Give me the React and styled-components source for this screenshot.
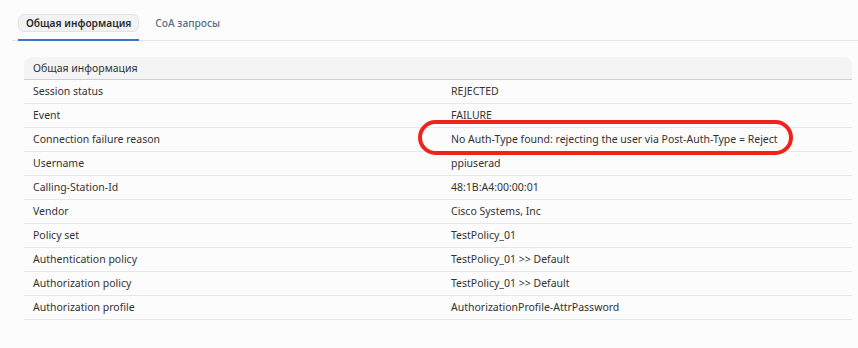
import styled, { createGlobalStyle } from "styled-components"

const Global = createGlobalStyle`
  html, body {
    margin: 0;
    padding: 0;
    background: #fcfcfc;
  }
  body {
    font-family: "Noto Sans", "Open Sans", sans-serif;
    font-size: 10.5px;
    color: #333;
  }
`

const Page = styled.div`
  width: 858px;
  height: 348px;
  padding-top: 14px;
  box-sizing: border-box;
`

const TabBar = styled.div`
  display: flex;
  gap: 8px;
  margin-left: 12px;
  padding-left: 6px;
  border-bottom: 1px solid #e6e6ea;
`

const Tab = styled.div`
  padding-bottom: 7px;
  margin-bottom: -1px;
  border-bottom: 2px solid ${(p) => (p.$active ? "#3b74c9" : "transparent")};
`

const TabLabel = styled.div`
  height: 18px;
  line-height: 17px;
  padding: 0 7px;
  box-sizing: border-box;
  border-radius: 6px;
  font-size: 10.2px;
  font-weight: ${(p) => (p.$active ? 600 : 500)};
  color: ${(p) => (p.$active ? "#2b2b2b" : "#5b6b88")};
  background: ${(p) => (p.$active ? "#f2f2f2" : "transparent")};
  border: 1px solid ${(p) => (p.$active ? "#e3e3e3" : "transparent")};
`

const Table = styled.div`
  margin: 16px 6px 0 24px;
`

const HeadRow = styled.div`
  height: 22px;
  line-height: 22px;
  padding-left: 9px;
  background: #f4f4f4;
  border-radius: 8px 8px 0 0;
  border-bottom: 1px solid #cfcdd9;
  color: #333;
`

const Row = styled.div`
  display: grid;
  grid-template-columns: 418px 1fr;
  height: 23px;
  line-height: 23px;
  border-bottom: 1px solid #e7e7e7;
`

const Cell = styled.div`
  position: relative;
  padding-left: 9px;
  white-space: nowrap;
`

const Highlight = styled.div`
  position: absolute;
  left: -24px;
  top: -8px;
  width: 375px;
  height: 35px;
  box-sizing: border-box;
  border: 4px solid #f0231a;
  border-radius: 18px;
  pointer-events: none;
`

const rows = [
  ["Session status", "REJECTED"],
  ["Event", "FAILURE"],
  ["Connection failure reason", "No Auth-Type found: rejecting the user via Post-Auth-Type = Reject", true],
  ["Username", "ppiuserad"],
  ["Calling-Station-Id", "48:1B:A4:00:00:01"],
  ["Vendor", "Cisco Systems, Inc"],
  ["Policy set", "TestPolicy_01"],
  ["Authentication policy", "TestPolicy_01 >> Default"],
  ["Authorization policy", "TestPolicy_01 >> Default"],
  ["Authorization profile", "AuthorizationProfile-AttrPassword"],
]

export default function App() {
  return (
    <Page>
      <Global />
      <TabBar>
        <Tab $active>
          <TabLabel $active>Общая информация</TabLabel>
        </Tab>
        <Tab>
          <TabLabel>CoA запросы</TabLabel>
        </Tab>
      </TabBar>

      <Table>
        <HeadRow>Общая информация</HeadRow>
        {rows.map(([label, value, marked]) => (
          <Row key={label}>
            <Cell>{label}</Cell>
            <Cell>
              {marked && <Highlight />}
              {value}
            </Cell>
          </Row>
        ))}
      </Table>
    </Page>
  )
}
